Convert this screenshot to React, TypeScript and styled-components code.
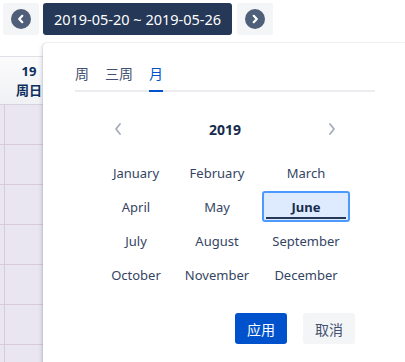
import React, { useState } from "react";
import styled, { createGlobalStyle } from "styled-components";

const Global = createGlobalStyle`
  html, body { margin: 0; padding: 0; background: #fff; }
  body { font-family: "Noto Sans", "Noto Sans CJK SC", sans-serif; color: #172b4d; overflow: hidden; }
  * { box-sizing: border-box; }
`;

const Page = styled.div`
  position: relative;
  width: 405px;
  height: 362px;
  overflow: hidden;
`;

const Toolbar = styled.div`
  display: flex;
  align-items: center;
  gap: 4px;
  padding: 3px;
`;

const NavButton = styled.button`
  width: 36px;
  height: 32px;
  border: none;
  border-radius: 3px;
  background: #f4f5f7;
  display: flex;
  align-items: center;
  justify-content: center;
  padding: 0;
  margin-left: ${(p: { $gap?: number }) => p.$gap ?? 0}px;
`;

const RangeButton = styled.button`
  width: 189px;
  height: 32px;
  border: none;
  border-radius: 3px;
  background: #253858;
  color: #fff;
  font-family: "Noto Sans", "Noto Sans CJK SC", sans-serif;
  font-size: 14.5px;
  padding: 0;
  display: flex;
  align-items: center;
  justify-content: center;
`;

const Calendar = styled.div`
  margin-top: 18px;
  display: grid;
  grid-template-columns: 4px 50px 50px 50px 50px 50px 50px 50px;
`;

const HeadCell = styled.div`
  height: 49px;
  border-top: 1px solid #dfe1e6;
  border-bottom: 1px solid #d6d3de;
  background: linear-gradient(#fbfbfc, #f0f1f4);
  display: flex;
  flex-direction: column;
  align-items: center;
  justify-content: center;
  font-weight: 700;
  font-size: 13px;
  line-height: 19px;
  color: #0d2e5c;
`;

const BodyCell = styled.div`
  height: 40px;
  background: #e9e6f2;
  border-bottom: 1px solid #d8c9dc;
  border-left: ${(p: { $first?: boolean }) => (p.$first ? "none" : "1px solid #d8c9dc")};
`;

const Popup = styled.div`
  position: absolute;
  left: 43px;
  top: 43px;
  width: 366px;
  height: 340px;
  background: #fff;
  border-radius: 4px;
  box-shadow: 0 0 1px rgba(9, 30, 66, 0.35), -1px 2px 4px rgba(9, 30, 66, 0.18);
  padding: 19px 34px 0 32px;
  display: flex;
  flex-direction: column;
`;

const Tabs = styled.div`
  display: flex;
  gap: 16px;
  border-bottom: 2px solid #ebecf0;
`;

const Tab = styled.div<{ $active?: boolean }>`
  font-size: 14px;
  line-height: 24px;
  padding-bottom: 4px;
  margin-bottom: -2px;
  color: ${(p) => (p.$active ? "#0052cc" : "#42526e")};
  border-bottom: 2px solid ${(p) => (p.$active ? "#0052cc" : "transparent")};
`;

const YearRow = styled.div`
  width: 250px;
  align-self: center;
  margin-top: 25px;
  height: 24px;
  display: flex;
  align-items: center;
  justify-content: space-between;
`;

const YearArrow = styled.div`
  width: 36px;
  height: 24px;
  display: flex;
  align-items: center;
  justify-content: center;
`;

const Year = styled.div`
  font-size: 14px;
  font-weight: 700;
  color: #172b4d;
`;

const MonthGrid = styled.div`
  align-self: center;
  margin-top: 16px;
  display: grid;
  grid-template-columns: 72px 90px 88px;
  grid-auto-rows: 31px;
  row-gap: 3px;
`;

const Month = styled.div<{ $selected?: boolean }>`
  position: relative;
  display: flex;
  align-items: center;
  justify-content: center;
  font-size: 13px;
  border-radius: 3px;
  color: ${(p) => (p.$selected ? "#172b4d" : "#344563")};
  font-weight: ${(p) => (p.$selected ? 700 : 400)};
  background: ${(p) => (p.$selected ? "#deebff" : "transparent")};
  border: 2px solid ${(p) => (p.$selected ? "#4c9aff" : "transparent")};
  &::after {
    content: "";
    display: ${(p) => (p.$selected ? "block" : "none")};
    position: absolute;
    left: 2px;
    right: 2px;
    bottom: 1px;
    height: 2px;
    background: #253858;
  }
`;

const Footer = styled.div`
  margin-top: 23px;
  margin-right: 20px;
  display: flex;
  justify-content: flex-end;
  gap: 16px;
`;

const ActionButton = styled.button<{ $primary?: boolean }>`
  width: 52px;
  height: 31px;
  border: none;
  border-radius: 3px;
  font-family: "Noto Sans", "Noto Sans CJK SC", sans-serif;
  font-size: 14px;
  padding: 0;
  background: ${(p) => (p.$primary ? "#0052cc" : "#f4f5f7")};
  color: ${(p) => (p.$primary ? "#fff" : "#42526e")};
`;

const CircleChevron = ({ dir }: { dir: "left" | "right" }) => (
  <svg width="20" height="20" viewBox="0 0 20 20">
    <circle cx="10" cy="10" r="10" fill="#505f79" />
    <path
      d={dir === "left" ? "M11.3 6.8 L8.2 10 L11.3 13.2" : "M8.7 6.8 L11.8 10 L8.7 13.2"}
      stroke="#fff"
      strokeWidth="2.2"
      fill="none"
      strokeLinecap="round"
      strokeLinejoin="round"
    />
  </svg>
);

const Chevron = ({ dir }: { dir: "left" | "right" }) => (
  <svg width="10" height="14" viewBox="0 0 10 14">
    <path
      d={dir === "left" ? "M7 2 L3 7 L7 12" : "M3 2 L7 7 L3 12"}
      stroke="#a5adba"
      strokeWidth="1.8"
      fill="none"
      strokeLinecap="round"
      strokeLinejoin="round"
    />
  </svg>
);

const months = [
  "January", "February", "March",
  "April", "May", "June",
  "July", "August", "September",
  "October", "November", "December",
];

const cols = 8;
const rows = 7;

export default function App() {
  const [tab, setTab] = useState(2);
  const [month, setMonth] = useState(5);
  const tabs = ["周", "三周", "月"];
  return (
    <Page>
      <Global />
      <Toolbar>
        <NavButton>
          <CircleChevron dir="left" />
        </NavButton>
        <RangeButton>2019-05-20 ~ 2019-05-26</RangeButton>
        <NavButton $gap={1}>
          <CircleChevron dir="right" />
        </NavButton>
      </Toolbar>
      <Calendar>
        {Array.from({ length: cols }).map((_, i) => (
          <HeadCell key={`h${i}`}>
            {i === 1 ? (
              <>
                <span>19</span>
                <span>周日</span>
              </>
            ) : null}
          </HeadCell>
        ))}
        {Array.from({ length: rows * cols }).map((_, i) => (
          <BodyCell key={`b${i}`} $first={i % cols === 0} />
        ))}
      </Calendar>
      <Popup>
        <Tabs>
          {tabs.map((t, i) => (
            <Tab key={t} $active={i === tab} onClick={() => setTab(i)}>
              {t}
            </Tab>
          ))}
        </Tabs>
        <YearRow>
          <YearArrow>
            <Chevron dir="left" />
          </YearArrow>
          <Year>2019</Year>
          <YearArrow>
            <Chevron dir="right" />
          </YearArrow>
        </YearRow>
        <MonthGrid>
          {months.map((m, i) => (
            <Month key={m} $selected={i === month} onClick={() => setMonth(i)}>
              {m}
            </Month>
          ))}
        </MonthGrid>
        <Footer>
          <ActionButton $primary>应用</ActionButton>
          <ActionButton>取消</ActionButton>
        </Footer>
      </Popup>
    </Page>
  );
}
